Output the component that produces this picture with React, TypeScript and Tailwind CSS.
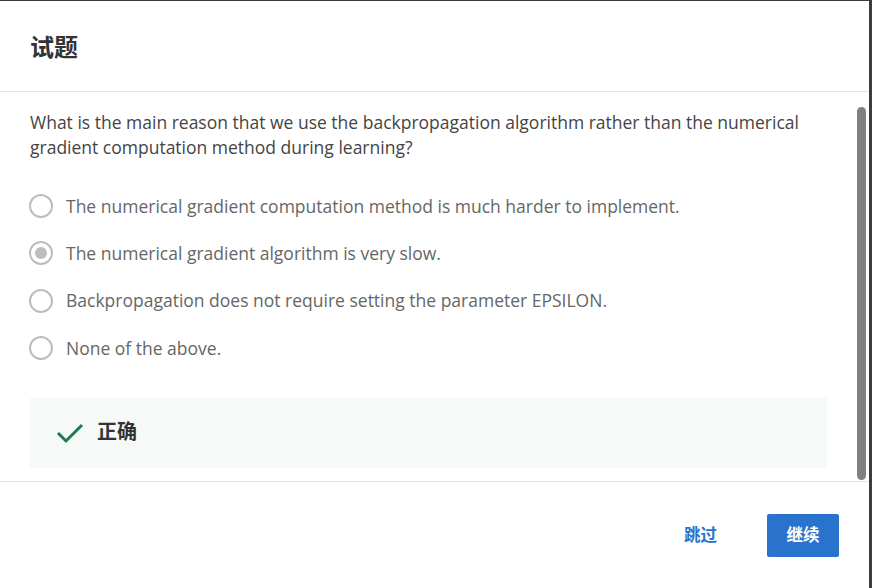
import React from "react";

const options = [
  "The numerical gradient computation method is much harder to implement.",
  "The numerical gradient algorithm is very slow.",
  "Backpropagation does not require setting the parameter EPSILON.",
  "None of the above.",
];

export default function App() {
  const font = { fontFamily: '"Open Sans", "Noto Sans CJK SC", sans-serif' };
  return (
    <div className="w-[872px] h-[588px] bg-[#3c3c3c] flex overflow-hidden" style={font}>
      <div className="mt-px w-[869px] h-[587px] bg-white flex flex-col">
        <div className="h-[91px] border-b border-[#e5e5e5] flex items-center px-[30px] shrink-0">
          <h1 className="text-[24px] font-bold text-[#333] leading-none mt-[2px]">试题</h1>
        </div>
        <div className="flex h-[390px] shrink-0 border-b border-[#e5e5e5]">
          <div className="flex-1 px-[30px] pt-[18px] overflow-hidden">
            <p className="text-[17.5px] leading-[25px] text-[#444]">
              What is the main reason that we use the backpropagation algorithm rather than the numerical gradient computation method during learning?
            </p>
            <div className="mt-[34px] flex flex-col gap-[23.3px]">
              {options.map((o, i) => (
                <div key={i} className="flex items-center h-[24px]">
                  <span className="w-[24px] h-[24px] rounded-full border-2 border-[#bdbdbd] flex items-center justify-center shrink-0 -ml-px">
                    {i === 1 && <span className="w-[12px] h-[12px] rounded-full bg-[#bdbdbd]" />}
                  </span>
                  <span className="ml-[13px] text-[17.5px] text-[#666]">{o}</span>
                </div>
              ))}
            </div>
            <div className="mt-[38px] h-[70px] bg-[#f5f9f8] flex items-center pl-[26px]">
              <svg width="28" height="22" viewBox="0 0 28 22" className="shrink-0">
                <path d="M2 11 L10 19 L26 3" fill="none" stroke="#1f7a4d" strokeWidth="3" />
              </svg>
              <span className="ml-[13px] text-[20px] font-bold text-[#333] -mt-[2px]">正确</span>
            </div>
          </div>
          <div className="w-[12px] pt-[15px] pb-[1px] flex justify-start">
            <div className="w-[9px] h-full rounded-full bg-[#808080]" />
          </div>
        </div>
        <div className="flex-1 flex items-center justify-end pr-[30px] gap-[50px]">
          <button className="text-[16.5px] font-bold text-[#2a73cc] -ml-[2px]">跳过</button>
          <button className="w-[72px] h-[43px] rounded-[2px] bg-[#2a73cc] text-white text-[16.5px] font-bold">继续</button>
        </div>
      </div>
    </div>
  );
}
